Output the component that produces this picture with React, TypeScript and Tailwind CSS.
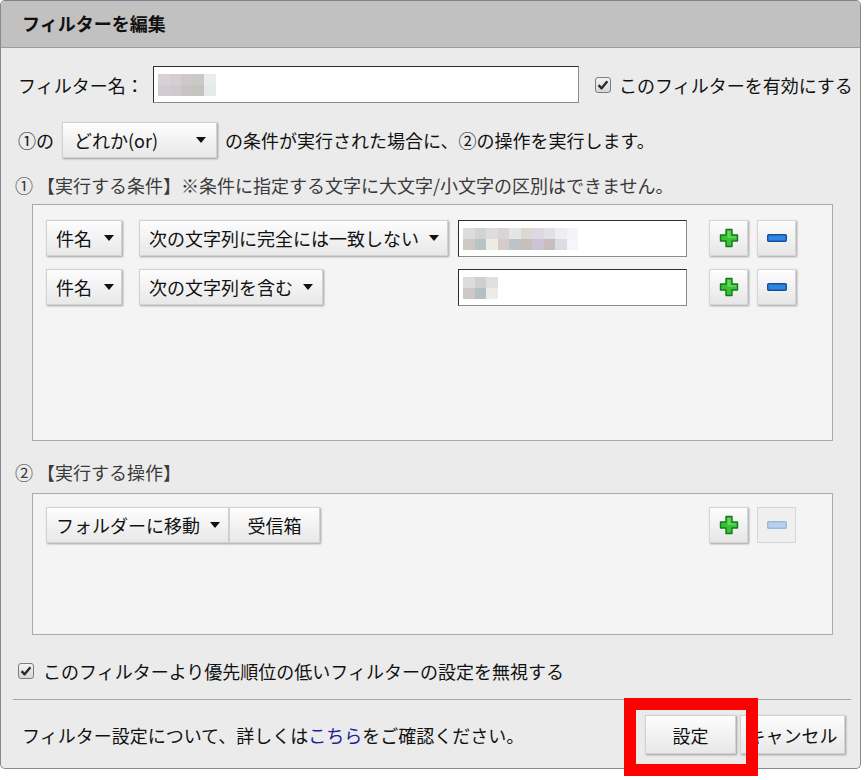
import type { ReactNode } from "react";

const FONT = "font-['Noto_Sans_CJK_JP','Liberation_Sans',sans-serif]";

function Caret() {
  return (
    <svg width="10" height="6" viewBox="0 0 10 6" className="shrink-0">
      <polygon points="0,0 10,0 5,6" fill="#111" />
    </svg>
  );
}

function CheckBox() {
  return (
    <svg width="16" height="16" viewBox="0 0 16 16" className="shrink-0">
      <defs>
        <linearGradient id="cb" x1="0" y1="0" x2="0" y2="1">
          <stop offset="0" stopColor="#f4f4f4" />
          <stop offset="1" stopColor="#d6d6d6" />
        </linearGradient>
      </defs>
      <rect x="0.5" y="0.5" width="15" height="15" rx="2.5" fill="url(#cb)" stroke="#7d7d7d" />
      <path d="M3.6 8.2 L6.6 11.3 L12.4 4.2" fill="none" stroke="#2a2a2a" strokeWidth="2.4" strokeLinejoin="round" />
    </svg>
  );
}

function PlusIcon() {
  return (
    <svg width="20" height="20" viewBox="0 0 20 20">
      <path
        d="M7 1.5 H13 V7 H18.5 V13 H13 V18.5 H7 V13 H1.5 V7 H7 Z"
        fill="#35c435"
        stroke="#167816"
        strokeWidth="1.4"
        strokeLinejoin="round"
      />
      <path d="M8.5 3 H11.5 V8.5 H17 V10 H8.5 Z" fill="#7fe37f" opacity="0.6" />
    </svg>
  );
}

function MinusIcon({ disabled }: { disabled?: boolean }) {
  return (
    <svg width="20" height="8" viewBox="0 0 20 8">
      <rect
        x="0.7"
        y="0.7"
        width="18.6"
        height="6.6"
        rx="1"
        fill={disabled ? "#b9d1ec" : "#2f86e0"}
        stroke={disabled ? "#9fb8d8" : "#174f9c"}
        strokeWidth="1.4"
      />
    </svg>
  );
}

function Btn({ children, className = "" }: { children: ReactNode; className?: string }) {
  return (
    <div
      className={
        "flex shrink-0 items-center h-[36px] bg-linear-to-b from-[#fdfdfd] to-[#e8e8e8] border border-[#d2d2d2] shadow-[1px_1px_2px_rgba(0,0,0,0.35)] text-[18px] text-[#111] leading-none " +
        className
      }
    >
      {children}
    </div>
  );
}

function IconBtn({ children, disabled }: { children: ReactNode; disabled?: boolean }) {
  return (
    <div
      className={
        "w-[39px] h-[36px] flex items-center justify-center border border-[#d6d6d6] " +
        (disabled
          ? "bg-[#efefef]"
          : "bg-linear-to-b from-[#fdfdfd] to-[#e6e6e6] shadow-[1px_1px_2px_rgba(0,0,0,0.35)]")
      }
    >
      {children}
    </div>
  );
}

function Mosaic({ rows }: { rows: string[][] }) {
  return (
    <div className="flex flex-col">
      {rows.map((r, i) => (
        <div key={i} className="flex">
          {r.map((c, j) => (
            <div key={j} className="w-[11.5px] h-[11px]" style={{ backgroundColor: c }} />
          ))}
        </div>
      ))}
    </div>
  );
}

function TextBox({ className = "", children }: { className?: string; children?: ReactNode }) {
  return (
    <div
      className={
        "h-[37px] shrink-0 bg-white border border-[#8c8c8c] border-t-[#2e2e2e] border-l-[#2e2e2e] flex items-center pl-[4px] " +
        className
      }
    >
      {children}
    </div>
  );
}

function CondRow({ op, opWidth, mosaic }: { op: string; opWidth: string; mosaic: string[][] }) {
  return (
    <div className="flex items-start">
      <Btn className="w-[76px] pl-[9px] gap-[12px]">
        <span>件名</span>
        <Caret />
      </Btn>
      <div className="w-[309px] ml-[17px]">
        <Btn className={opWidth + " pl-[9px] gap-[10px]"}>
          <span>{op}</span>
          <Caret />
        </Btn>
      </div>
      <TextBox className="w-[229px] ml-[10px]">
        <Mosaic rows={mosaic} />
      </TextBox>
      <div className="ml-[22px] flex gap-[9px]">
        <IconBtn>
          <PlusIcon />
        </IconBtn>
        <IconBtn>
          <MinusIcon />
        </IconBtn>
      </div>
    </div>
  );
}

export default function App() {
  return (
    <div className={"relative w-[866px] h-[780px] bg-white text-[#111] " + FONT}>
      <div className="w-[861px] h-[769px] border border-[#8a8a8a] border-t-[#7f8294] rounded-[5px] overflow-hidden bg-[#ebebeb] flex flex-col">
        <div className="h-[47px] shrink-0 bg-[#c1c1c1] border-b border-[#9c9c9c] flex items-center pl-[21px] pb-[2px] text-[18px] font-bold leading-none">
          フィルターを編集
        </div>

        <div className="pl-[12px] pr-[9px] flex flex-col text-[18px] leading-none">
          <div className="mt-[18px] h-[37px] flex items-center">
            <span className="ml-[5px] w-[135px] shrink-0 whitespace-nowrap">フィルター名：</span>
            <TextBox className="w-[426px]">
              <Mosaic
                rows={[
                  ["#d9d1d5", "#d6ced2", "#cfc9cc", "#c9cac4", "#e9eded"],
                  ["#d3cbcf", "#d1c9cd", "#c9c3c6", "#c2c5bd", "#e6eaea"],
                ]}
              />
            </TextBox>
            <div className="ml-[16px] flex items-center gap-[8px] whitespace-nowrap">
              <CheckBox />
              <span>このフィルターを有効にする</span>
            </div>
          </div>

          <div className="mt-[19px] h-[36px] flex items-center">
            <span className="ml-[5px] w-[44px]">①の</span>
            <Btn className="w-[155px] pl-[11px] pr-[10px] justify-between">
              <span>どれか(or)</span>
              <Caret />
            </Btn>
            <span className="ml-[8px]">の条件が実行された場合に、②の操作を実行します。</span>
          </div>

          <div className="mt-[15px] h-[24px] flex items-center ml-[2px] text-[#3a3a3a] whitespace-nowrap">
            ① 【実行する条件】※条件に指定する文字に大文字/小文字の区別はできません。
          </div>

          <div className="mt-[7px] ml-[19px] mr-[18px] h-[237px] bg-[#f4f4f4] border border-[#aaaaaa] pt-[15px] pl-[13px] flex flex-col gap-[12px]">
            <CondRow
              op="次の文字列に完全には一致しない"
              opWidth="w-[309px]"
              mosaic={[
                ["#dcdcdc", "#d0d4d4", "#dedcdc", "#d8d4d8", "#e4e6e6", "#dcd8d4", "#dcd8e4", "#e2e2e4", "#eeeef2", "#f4f4f6"],
                ["#cdc8c4", "#b8c4c4", "#ecece4", "#d4ccc8", "#bcc4c8", "#c8c0b8", "#ccc4d4", "#c8bcbc", "#dcdce4", "#f6f6f8"],
              ]}
            />
            <CondRow
              op="次の文字列を含む"
              opWidth="w-[184px]"
              mosaic={[
                ["#dcdcdc", "#ccd0d0", "#e0e0e0"],
                ["#cdc8c4", "#b4c0c4", "#ecece4"],
              ]}
            />
          </div>

          <div className="mt-[19px] h-[24px] flex items-center ml-[2px] text-[#3a3a3a]">
            ② 【実行する操作】
          </div>

          <div className="mt-[9px] ml-[19px] mr-[18px] h-[142px] bg-[#f4f4f4] border border-[#aaaaaa] pt-[13px] pl-[13px] flex items-start">
            <Btn className="w-[183px] pl-[9px] gap-[10px]">
              <span>フォルダーに移動</span>
              <Caret />
            </Btn>
            <Btn className="w-[91px] justify-center">
              <span>受信箱</span>
            </Btn>
            <div className="ml-[389px] flex gap-[9px]">
              <IconBtn>
                <PlusIcon />
              </IconBtn>
              <IconBtn disabled>
                <MinusIcon disabled />
              </IconBtn>
            </div>
          </div>

          <div className="mt-[24px] h-[24px] flex items-center ml-[5px] gap-[9px]">
            <CheckBox />
            <span>このフィルターより優先順位の低いフィルターの設定を無視する</span>
          </div>

          <div className="mt-[16px] h-px bg-[#a8a8a8]" />

          <div className="mt-[15px] h-[39px] flex items-center">
            <span className="ml-[9px] flex-1">
              フィルター設定について、詳しくは<span className="text-[#1f1f9e]">こちら</span>をご確認ください。
            </span>
            <div className="flex gap-[4px] mr-[6px]">
              <Btn className="w-[91px] h-[39px] justify-center">設定</Btn>
              <Btn className="w-[105px] h-[39px] justify-center">キャンセル</Btn>
            </div>
          </div>
        </div>
      </div>

      <div className="absolute left-[624px] top-[698px] w-[134px] h-[78px] border-[12px] border-[#ff0000]" />
    </div>
  );
}
